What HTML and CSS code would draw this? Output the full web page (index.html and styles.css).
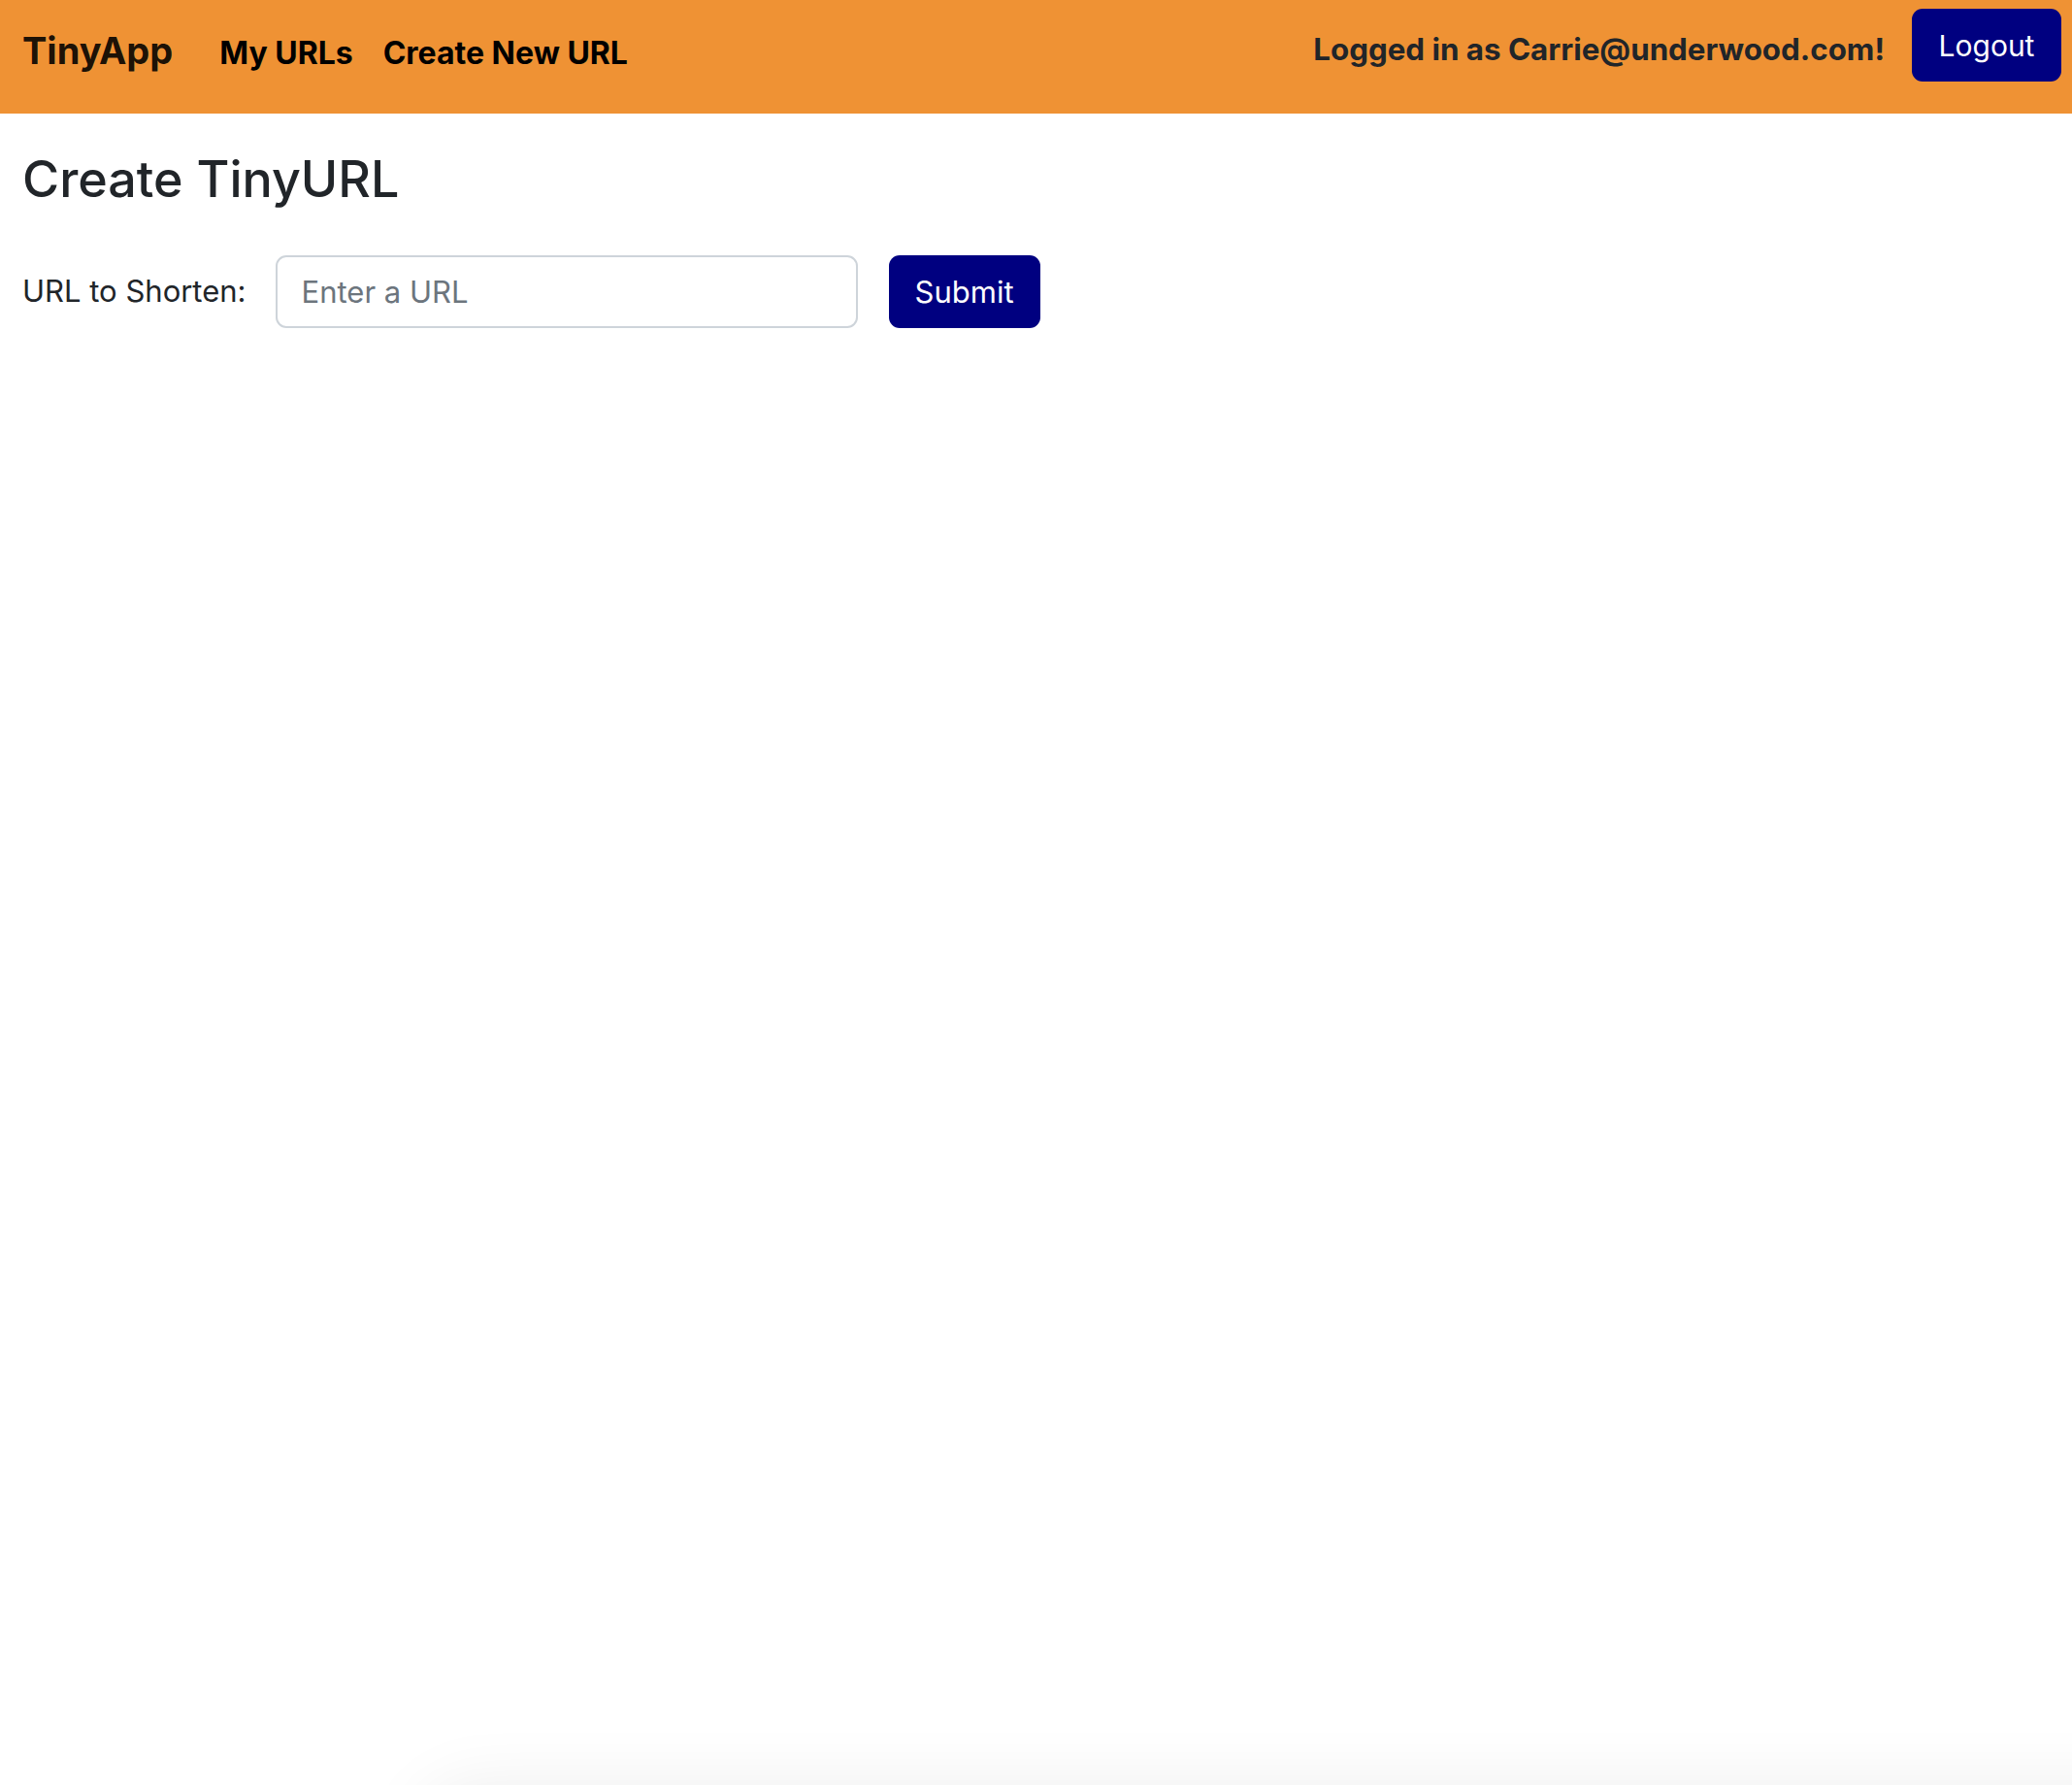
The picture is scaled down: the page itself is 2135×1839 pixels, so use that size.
FILE: index.html
```html
<!DOCTYPE html>
<html lang="en">
<head>
<meta charset="utf-8">
<title>TinyApp</title>
<link rel="stylesheet" href="styles.css">
</head>
<body>
<nav class="navbar">
  <a class="brand" href="#">TinyApp</a>
  <div class="nav-links">
    <a class="nav-link" href="#">My URLs</a>
    <a class="nav-link" href="#">Create New URL</a>
  </div>
  <span class="user">Logged in as Carrie@underwood.com!</span>
  <button class="btn logout" type="button">Logout</button>
</nav>
<main class="page">
  <h2 class="title">Create TinyURL</h2>
  <form class="url-form">
    <label class="label" for="longURL">URL to Shorten:</label>
    <input class="input" id="longURL" type="text" placeholder="Enter a URL">
    <button class="btn submit" type="submit">Submit</button>
  </form>
</main>
<div class="bottom-shadow"></div>
</body>
</html>
```
FILE: styles.css
```css
* { box-sizing: border-box; }
html, body { margin: 0; padding: 0; background: #fff; }
body {
  font-family: Inter, "Noto Sans", "Liberation Sans", sans-serif;
  font-size: 31px;
  line-height: 1.5;
  color: #212529;
  overflow: hidden;
  height: 1839px;
}
a { text-decoration: none; }

.navbar {
  display: flex;
  align-items: flex-start;
  height: 117px;
  background: #ef9234;
  padding: 0 11px 0 23px;
}
.brand {
  font-size: 38px;
  font-weight: 700;
  line-height: 57px;
  padding-top: 24px;
  color: rgba(0, 0, 0, 0.9);
  margin-right: 48px;
}
.nav-links {
  display: flex;
  gap: 31px;
  padding-top: 32px;
}
.nav-link {
  font-size: 32px;
  font-weight: 700;
  line-height: 46px;
  color: #000;
}
.user {
  margin-left: auto;
  margin-right: 28px;
  padding-top: 28px;
  font-size: 31.3px;
  font-weight: 700;
  line-height: 46px;
  color: #212529;
}
.btn {
  font-family: inherit;
  font-size: 30px;
  font-weight: 400;
  color: #fff;
  background: #000080;
  border: 0;
  border-radius: 11px;
  height: 75px;
  cursor: pointer;
}
.logout {
  margin-top: 9px;
  width: 154px;
}

.page {
  padding: 0 23px;
}
.title {
  font-size: 52px;
  font-weight: 500;
  line-height: 67px;
  margin: 34px 0 45px;
  color: #212529;
}
.url-form {
  display: flex;
  align-items: center;
}
.label {
  margin-right: 30px;
}
.input {
  width: 600px;
  height: 75px;
  border: 2px solid #ced4da;
  border-radius: 11px;
  padding: 0 25px;
  font-family: inherit;
  font-size: 31px;
  color: #212529;
  margin-right: 32px;
}
.input::placeholder { color: #6c757d; }
.submit {
  width: 156px;
  font-size: 31px;
}

.bottom-shadow {
  position: fixed;
  left: 430px;
  right: -120px;
  bottom: -120px;
  height: 120px;
  border-radius: 60px;
  box-shadow: 0 0 70px rgba(0, 0, 0, 0.07);
}
```
